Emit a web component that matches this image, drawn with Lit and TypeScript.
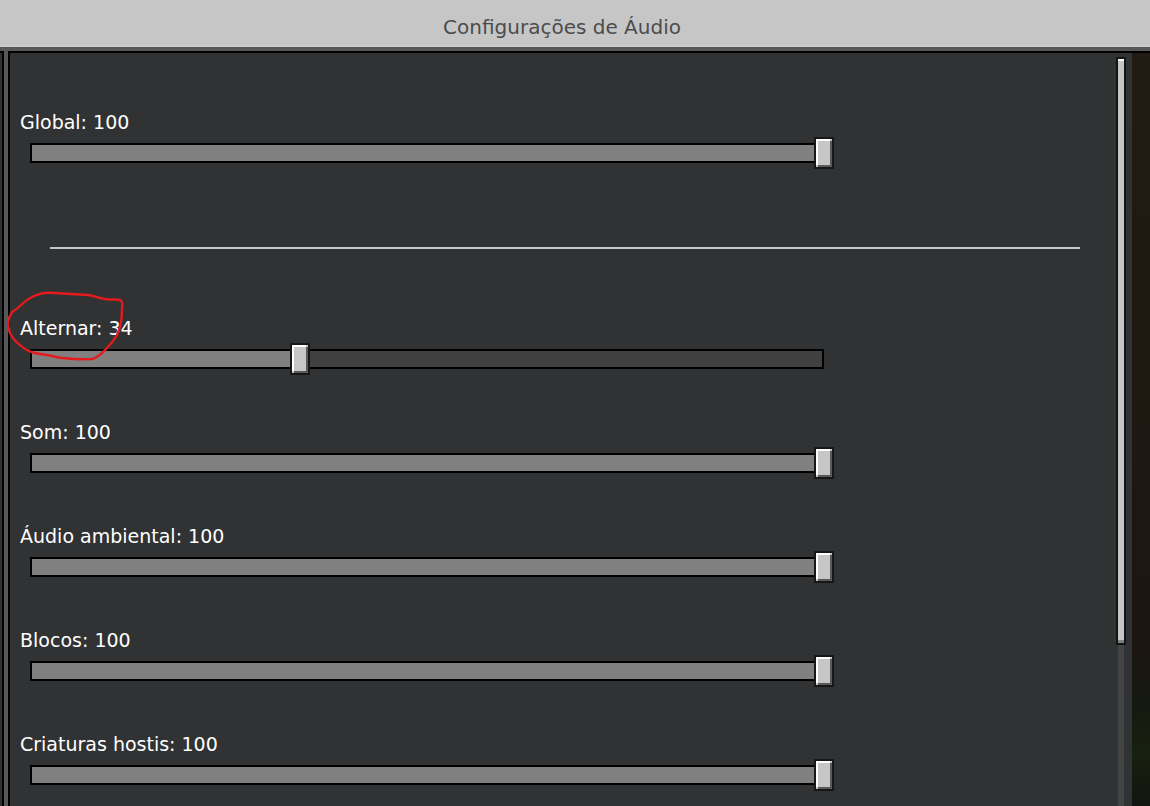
import { LitElement, html, css } from "lit";
import { customElement, property, state } from "lit/decorators.js";
import { styleMap } from "lit/directives/style-map.js";

@customElement("volume-slider")
class VolumeSlider extends LitElement {
  @property() label = "";
  @property({ type: Number }) value = 100;

  static styles = css`
    :host {
      display: block;
    }
    .label {
      display: block;
      line-height: 24px;
      margin-bottom: 3px;
      white-space: nowrap;
      color: #ffffff;
    }
    /* The bar is inset by half a thumb on each side, so the thumb is centred on its value. */
    .range {
      appearance: none;
      -webkit-appearance: none;
      display: block;
      width: 100%;
      height: 32px;
      margin: 0;
      background:
        linear-gradient(#808080, #808080) 12px 8px / calc((100% - 24px) * var(--level)) 16px no-repeat,
        linear-gradient(#404040, #404040) 12px 8px / calc(100% - 24px) 16px no-repeat,
        linear-gradient(#000000, #000000) 10px 6px / calc(100% - 20px) 20px no-repeat;
    }
    .range:focus-visible {
      outline: 2px solid #ffffff;
    }
    .range::-webkit-slider-runnable-track {
      height: 32px;
    }
    .range::-webkit-slider-thumb {
      -webkit-appearance: none;
      box-sizing: border-box;
      width: 20px;
      height: 32px;
      border: 2px solid #171718;
      background:
        linear-gradient(#c6c6c6, #c6c6c6) 0 100% / 2px 2px no-repeat,
        linear-gradient(#c6c6c6, #c6c6c6) 100% 0 / 2px 2px no-repeat,
        linear-gradient(#ffffff, #ffffff) 0 0 / 2px 100% no-repeat,
        linear-gradient(#ffffff, #ffffff) 0 0 / 100% 2px no-repeat,
        linear-gradient(#5a5a5b, #5a5a5b) 100% 0 / 2px 100% no-repeat,
        linear-gradient(#5a5a5b, #5a5a5b) 0 100% / 100% 2px no-repeat,
        #c6c6c6;
      background-origin: padding-box;
    }
  `;

  private onInput(e: Event) {
    this.value = Number((e.target as HTMLInputElement).value);
  }

  render() {
    return html`
      <label class="label" for="range">${this.label}: ${this.value}</label>
      <input
        id="range"
        class="range"
        type="range"
        min="0"
        max="100"
        .value=${String(this.value)}
        style=${styleMap({ "--level": String(this.value / 100) })}
        @input=${this.onInput}
      />
    `;
  }
}

@customElement("app-root")
class AppRoot extends LitElement {
  @state() private channels = [
    { label: "Alternar", value: 34 },
    { label: "Som", value: 100 },
    { label: "Áudio ambiental", value: 100 },
    { label: "Blocos", value: 100 },
    { label: "Criaturas hostis", value: 100 },
  ];

  static styles = css`
    :host {
      display: flex;
      flex-direction: column;
      position: relative;
      min-height: 100vh;
      font: 19px/24px "DejaVu Sans", sans-serif;
      background: #58585a;
    }
    .header {
      padding: 15px 26px 6px 0;
      border-bottom: 2px solid #cbcbcb;
      background: #c6c6c6;
      text-align: center;
    }
    .title {
      margin: 0;
      font: inherit;
      font-size: 20px;
      color: #4c4c4c;
    }
    .body {
      flex: 1;
      display: flex;
      margin-top: 4px;
    }
    .side {
      box-sizing: border-box;
      width: 4px;
      margin-right: 4px;
      border: solid #000000;
      border-width: 2px 2px 0 0;
      background: #313233;
    }
    .panel {
      flex: 1;
      display: flex;
      border: solid #000000;
      border-width: 2px 0 0 2px;
      background: #313233;
    }
    .settings {
      flex: 1;
      padding: 57px 0 10px;
    }
    .field {
      width: 74%;
      margin-left: 10px;
    }
    .divider {
      height: 2px;
      margin: 78px 30px 67px 40px;
      border: 0;
      background: #c6c6c6;
    }
    .channels {
      display: flex;
      flex-direction: column;
      gap: 45px;
    }
    .scrollbar {
      width: 10px;
      margin: 4px 6px 0;
      background: linear-gradient(#444445, #444445) 2px 0 / 6px 100% no-repeat;
    }
    .thumb {
      box-sizing: border-box;
      height: 78.5%;
      border: 2px solid #131414;
      background:
        linear-gradient(#ffffff, #ffffff) 0 0 / 100% 2px no-repeat,
        linear-gradient(#808080, #808080) 0 100% / 100% 3px no-repeat,
        #c6c6c6;
      background-origin: padding-box;
    }
    .world {
      width: 18px;
      border-top: 2px solid #000000;
      background: linear-gradient(#211b13, #1b1610 80%, #141a10 87%, #18200f 93%, #11150f);
    }
    .mark {
      position: absolute;
      left: 0;
      top: 280px;
      pointer-events: none;
    }
  `;

  render() {
    return html`
      <header class="header"><h1 class="title">Configurações de Áudio</h1></header>
      <div class="body">
        <div class="side"></div>
        <main class="panel">
          <div class="settings">
            <volume-slider class="field" label="Global" .value=${100}></volume-slider>
            <hr class="divider" />
            <div class="channels">
              ${this.channels.map(
                (c) => html`<volume-slider class="field" .label=${c.label} .value=${c.value}></volume-slider>`
              )}
            </div>
          </div>
          <div class="scrollbar"><div class="thumb"></div></div>
        </main>
        <div class="world"></div>
      </div>
      <svg class="mark" width="140" height="90" viewBox="0 0 140 90" fill="none" aria-hidden="true">
        <path
          d="M12 32C15 30 17 29 20 26C24 22 28 19 32 17C38 14 44 12.500 50 12.700L88 15C95 16 101 19 107 19.300C111 20 116 19 120 20C122 21 122.500 23 122.200 26L121.500 39C121 45 119 51 117 55C114 60 111 64 107 68C102 73 98 78 92 79L80 79.300C72 79 65 78.500 58 77.500C50 75 41 74.500 33 72.500C28 71 23 68 20 65C16 62 12 57 10 53C7 46 8 38 12 32Z"
          stroke="#e61a1d"
          stroke-width="2.4"
          stroke-linejoin="round"
        />
      </svg>
    `;
  }
}
